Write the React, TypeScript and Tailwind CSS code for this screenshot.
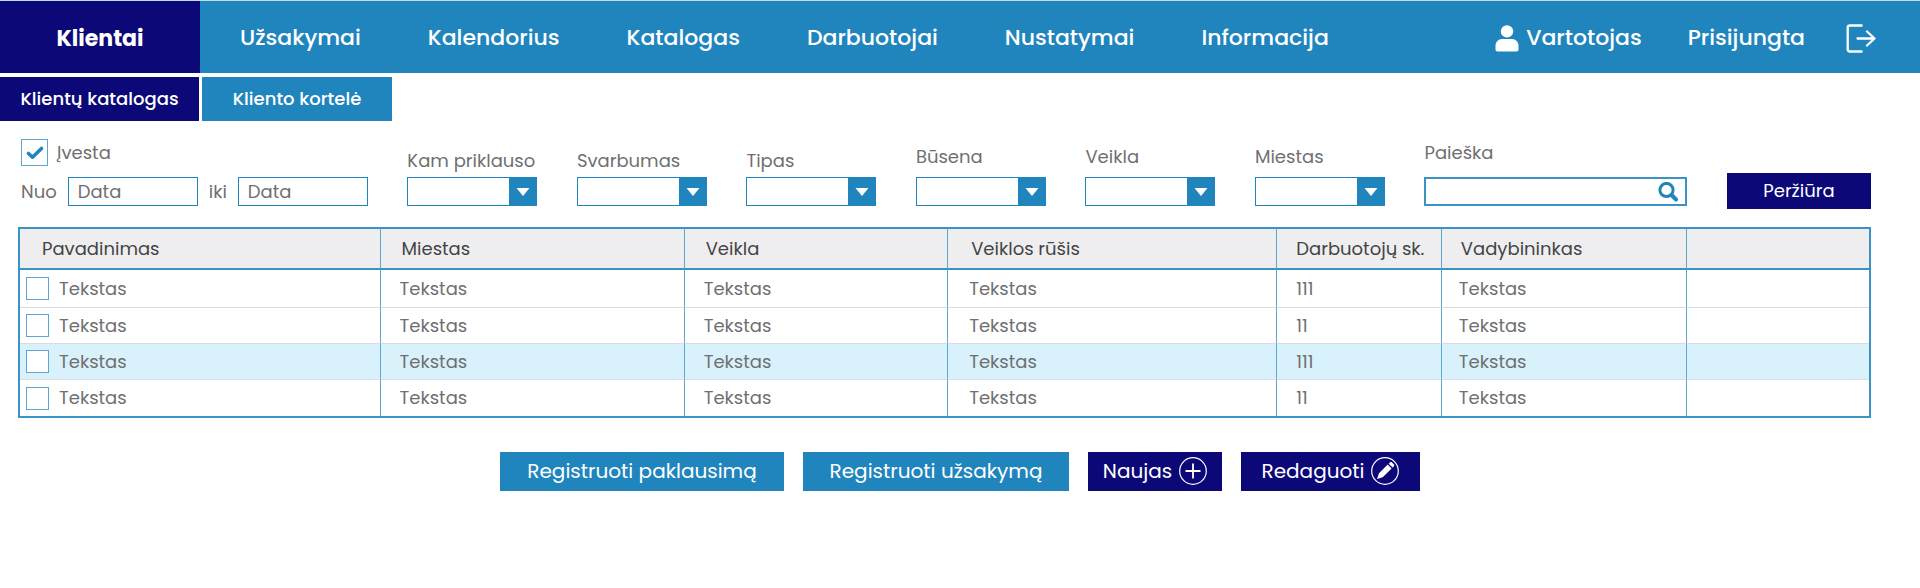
import type { ReactNode } from 'react';

const navItems = ['Užsakymai', 'Kalendorius', 'Katalogas', 'Darbuotojai', 'Nustatymai', 'Informacija'];

const filters = [
  { id: 'owner', label: 'Kam priklauso', gap: 'gap-1' },
  { id: 'priority', label: 'Svarbumas', gap: 'gap-1' },
  { id: 'type', label: 'Tipas', gap: 'gap-1' },
  { id: 'status', label: 'Būsena', gap: 'gap-2' },
  { id: 'activity', label: 'Veikla', gap: 'gap-2' },
  { id: 'city', label: 'Miestas', gap: 'gap-2' },
];

const columns = [
  { title: 'Pavadinimas', width: 'w-[19.5%]', headPad: 'pl-[22px]', cellPad: 'pl-1.5' },
  { title: 'Miestas', width: 'w-[16.45%]', headPad: 'pl-[21px]', cellPad: 'pl-[19px]' },
  { title: 'Veikla', width: 'w-[14.25%]', headPad: 'pl-[21px]', cellPad: 'pl-[19px]' },
  { title: 'Veiklos rūšis', width: 'w-[17.8%]', headPad: 'pl-[23px]', cellPad: 'pl-[21px]' },
  { title: 'Darbuotojų sk.', width: 'w-[8.9%]', headPad: 'pl-[19px]', cellPad: 'pl-[19px]' },
  { title: 'Vadybininkas', width: 'w-[13.25%]', headPad: 'pl-[19px]', cellPad: 'pl-[17px]' },
  { title: '', width: 'w-[9.85%]', headPad: 'pl-[19px]', cellPad: 'pl-[17px]' },
];

const rows = [
  { id: 1, count: '111', selected: false },
  { id: 2, count: '11', selected: false },
  { id: 3, count: '111', selected: true },
  { id: 4, count: '11', selected: false },
];

function UserIcon() {
  return (
    <svg className="h-[27px] w-6" viewBox="0 0 24 27" fill="currentColor" aria-hidden="true">
      <circle cx="12" cy="6.400" r="6.200" />
      <path d="M.5 24.500V21c0-4 2.800-7 6.500-7h10c3.700 0 6.500 3 6.500 7v3.500c0 1.200-.8 2-2 2h-19c-1.200 0-2-.8-2-2Z" />
    </svg>
  );
}

function LogoutIcon() {
  return (
    <svg className="h-[29px] w-[30px]" viewBox="0 0 30 29" fill="none" stroke="currentColor" strokeWidth="2.300" strokeLinecap="round" strokeLinejoin="round" aria-hidden="true">
      <path d="M16.500 1.500H4a2.300 2.300 0 0 0-2.300 2.300v21.400A2.300 2.300 0 0 0 4 27.500h12.500" strokeLinecap="butt" />
      <path d="M11.500 14.500h16.500M21 7.500l7.500 7-7.500 7" />
    </svg>
  );
}

function SearchIcon() {
  return (
    <svg className="h-5 w-5" viewBox="0 0 20 20" fill="none" stroke="currentColor" aria-hidden="true">
      <circle cx="8.500" cy="8" r="6.600" strokeWidth="3" />
      <path d="M13.500 13l4.500 4.500" strokeWidth="4" strokeLinecap="round" />
    </svg>
  );
}

function PlusIcon() {
  return (
    <svg className="h-7 w-7" viewBox="0 0 28 28" fill="none" stroke="currentColor" aria-hidden="true">
      <circle cx="14" cy="14" r="13.300" strokeWidth="1.200" />
      <path d="M14 6.500v15M6.500 14h15" strokeWidth="1.800" />
    </svg>
  );
}

function PencilIcon() {
  return (
    <svg className="h-7 w-7" viewBox="0 0 28 28" aria-hidden="true">
      <circle cx="14" cy="14" r="13.300" fill="none" stroke="currentColor" strokeWidth="1.200" />
      <path fill="currentColor" d="M6 22l2-5.700L16.700 7.600l3.900 3.900-8.900 8.700ZM17.700 6.700l1.200-1.200c.6-.6 1.500-.6 2.100 0l1.800 1.800c.6.6.6 1.500 0 2.100L21.600 10.600Z" />
    </svg>
  );
}

function ActionButton({ className, children }: { className: string; children: ReactNode }) {
  return (
    <button type="button" className={`flex h-[39px] items-center justify-center gap-[7px] pb-0.5 text-xl whitespace-nowrap text-white ${className}`}>
      {children}
    </button>
  );
}

function DateInput({ id, label }: { id: string; label: string }) {
  return (
    <>
      <label htmlFor={id}>{label}</label>
      <input
        id={id}
        type="text"
        placeholder="Data"
        className="h-[29px] w-[130px] border border-[#2185bd] bg-white px-[9px] outline-none placeholder:text-[#6f6f71] placeholder:opacity-100"
      />
    </>
  );
}

export default function App() {
  return (
    <div className="bg-white font-['Poppins','Inter',sans-serif] text-[18px] leading-6 text-[#6f6f71]">
      <header className="flex h-[73px] items-stretch justify-between border-t border-[#bfdcec] bg-[#2185bd] text-[22px] font-medium text-white">
        <nav className="flex items-stretch" aria-label="Pagrindinis">
          <a href="#klientai" aria-current="page" className="flex w-[200px] items-center justify-center bg-[#0d0877] pt-[3px] font-bold">
            Klientai
          </a>
          <div className="flex items-center gap-[67px] pt-0.5 pl-10">
            {navItems.map((item) => (
              <a key={item} href="#nav">{item}</a>
            ))}
          </div>
        </nav>
        <div className="flex items-center pt-0.5 pr-11">
          <a href="#vartotojas" className="flex items-center gap-[7px]">
            <UserIcon />
            Vartotojas
          </a>
          <span className="ml-[46px]">Prisijungta</span>
          <button type="button" aria-label="Atsijungti" className="ml-[41px]">
            <LogoutIcon />
          </button>
        </div>
      </header>

      <nav className="mt-1 flex h-11 gap-[3px] text-[18px] font-medium text-white" aria-label="Klientai">
        <a href="#katalogas" aria-current="page" className="flex w-[199px] items-center justify-center bg-[#0d0877]">
          Klientų katalogas
        </a>
        <a href="#kortele" className="flex w-[190px] items-center justify-center bg-[#2185bd]">
          Kliento kortelė
        </a>
      </nav>

      <main>
        <form className="flex items-end justify-between pt-[18px] pr-[49px] pl-[21px]">
          <div className="flex flex-col gap-[11px]">
            <label className="flex items-center gap-[9px]">
              <span className="grid h-[27px] w-[27px] place-items-center">
                <input type="checkbox" defaultChecked className="peer col-start-1 row-start-1 h-[27px] w-[27px] appearance-none border border-[#5da6cf] bg-white" />
                <svg className="pointer-events-none col-start-1 row-start-1 hidden h-3.5 w-[18px] text-[#2185bd] peer-checked:block" viewBox="0 0 18 14" fill="none" stroke="currentColor" strokeWidth="3.600" strokeLinecap="round" strokeLinejoin="round" aria-hidden="true">
                  <path d="M2.500 7.500l4 3.700L15.500 2.500" />
                </svg>
              </span>
              Įvesta
            </label>
            <div className="flex items-center gap-[11px]">
              <DateInput id="from" label="Nuo" />
              <DateInput id="to" label="iki" />
            </div>
          </div>

          {filters.map((f) => (
            <div key={f.id} className={`flex w-[130px] flex-col ${f.gap}`}>
              <label htmlFor={f.id} className="whitespace-nowrap">{f.label}</label>
              <div className="relative flex">
                <select id={f.id} className="h-[29px] w-full appearance-none border border-[#2185bd] bg-white px-2 outline-none">
                  <option value=""></option>
                </select>
                <span className="pointer-events-none absolute inset-y-0 right-0 flex w-7 items-center justify-center bg-[#2185bd] text-white">
                  <svg className="h-2 w-3.5" viewBox="0 0 14 8" fill="currentColor" aria-hidden="true">
                    <path d="M.5 0h13L7 8Z" />
                  </svg>
                </span>
              </div>
            </div>
          ))}

          <div className="flex w-[263px] flex-col gap-3">
            <label htmlFor="search">Paieška</label>
            <div className="flex h-[29px] items-center border-2 border-[#3a93c5] pr-[7px] text-[#2185bd]">
              <input id="search" type="text" className="min-w-0 flex-1 px-2 outline-none" />
              <button type="button" aria-label="Ieškoti">
                <SearchIcon />
              </button>
            </div>
          </div>

          <button type="submit" className="-mb-[3px] h-9 w-36 bg-[#0d0877] text-white">
            Peržiūra
          </button>
        </form>

        <div className="pt-[21px] pr-[49px] pl-[18px]">
          <table className="w-full table-fixed border-separate border-spacing-0 border-2 border-[#3a93c5] text-left">
            <thead>
              <tr className="h-[41px] bg-[#eeeef0] text-[#444446]">
                {columns.map((c) => (
                  <th key={c.title} scope="col" className={`border-r border-b-2 border-r-[#5da6cf] border-b-[#3a93c5] p-0 font-normal whitespace-nowrap last:border-r-0 ${c.width} ${c.headPad}`}>
                    {c.title}
                  </th>
                ))}
              </tr>
            </thead>
            <tbody className="[&>tr:last-child>td]:border-b-0">
              {rows.map((r) => (
                <tr key={r.id} className={`h-9 first:h-[38px] ${r.selected ? 'bg-[#d9f1fb]' : 'bg-white'}`}>
                  <td className="border-r border-b border-r-[#5da6cf] border-b-[#dcdcde] p-0 pl-1.5">
                    <label className="flex items-center gap-2.5">
                      <input type="checkbox" className="h-[23px] w-[23px] appearance-none border border-[#5da6cf] bg-white checked:bg-[#2185bd]" />
                      Tekstas
                    </label>
                  </td>
                  {['Tekstas', 'Tekstas', 'Tekstas', r.count, 'Tekstas', ''].map((text, i) => (
                    <td key={i} className={`border-r border-b border-r-[#5da6cf] border-b-[#dcdcde] p-0 last:border-r-0 ${columns[i + 1].cellPad}`}>
                      {text}
                    </td>
                  ))}
                </tr>
              ))}
            </tbody>
          </table>
        </div>

        <div className="mt-[34px] flex justify-center gap-[19px]">
          <ActionButton className="w-[284px] bg-[#2185bd]">Registruoti paklausimą</ActionButton>
          <ActionButton className="w-[266px] bg-[#2185bd]">Registruoti užsakymą</ActionButton>
          <ActionButton className="w-[134px] bg-[#0d0877]">
            Naujas
            <PlusIcon />
          </ActionButton>
          <ActionButton className="w-[179px] bg-[#0d0877]">
            Redaguoti
            <PencilIcon />
          </ActionButton>
        </div>
      </main>
    </div>
  );
}
